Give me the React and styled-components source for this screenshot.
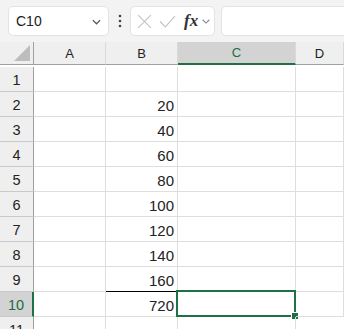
import React from "react";
import styled, { createGlobalStyle } from "styled-components";

const Global = createGlobalStyle`
  html, body {
    margin: 0;
    padding: 0;
    background: #fff;
    font-family: "Liberation Sans", "Noto Sans", sans-serif;
  }
`;

const Page = styled.div`
  width: 344px;
  height: 329px;
  overflow: hidden;
  background: #f3f3f3;
`;

const Toolbar = styled.div`
  display: flex;
  align-items: center;
  height: 42px;
  padding: 0 0 0 8px;
  box-sizing: border-box;
  background: #f3f3f3;
`;

const NameBox = styled.div`
  width: 101px;
  height: 30px;
  box-sizing: border-box;
  background: #fff;
  border: 1px solid #e3e3e3;
  border-radius: 5px;
  display: flex;
  align-items: center;
  justify-content: space-between;
  padding: 0 6px 0 7px;
  font-size: 14px;
  color: #222;
`;

const Dots = styled.div`
  width: 21px;
  display: flex;
  justify-content: center;
  color: #444;
`;

const FxBox = styled.div`
  width: 85px;
  height: 30px;
  box-sizing: border-box;
  background: #fff;
  border: 1px solid #e3e3e3;
  border-radius: 5px;
  display: flex;
  align-items: center;
  padding: 0 0 0 5px;
  gap: 6px;
`;

const Fx = styled.span`
  font-family: "Liberation Serif", "DejaVu Serif", serif;
  font-style: italic;
  font-weight: bold;
  font-size: 17px;
  color: #333;
  margin-left: 2px;
  margin-right: -3px;
`;

const FormulaInput = styled.div`
  flex: 1;
  height: 30px;
  margin-left: 6px;
  margin-right: -10px;
  box-sizing: border-box;
  background: #fff;
  border: 1px solid #e3e3e3;
  border-radius: 5px;
`;

const Grid = styled.div`
  display: grid;
  grid-template-columns: 34px 72px 72px 118px 1fr;
  grid-auto-rows: 25px;
  background: #fff;
`;

const HeaderCell = styled.div`
  height: 23px;
  box-sizing: border-box;
  background: ${(p) => (p.$active ? "#d3d3d3" : "#efefef")};
  border-right: 1px solid ${(p) => (p.$corner ? "#a0a0a0" : "#dadada")};
  border-bottom: ${(p) => (p.$active ? "2px solid #1e7145" : "1px solid #a0a0a0")};
  display: flex;
  align-items: center;
  justify-content: center;
  font-size: 13px;
  color: ${(p) => (p.$active ? "#1e6b45" : "#222")};
  position: relative;
  &:last-child {
    border-right: none;
  }
`;

const Corner = styled.div`
  position: absolute;
  right: 3px;
  bottom: 3px;
  width: 0;
  height: 0;
  border-left: 16px solid transparent;
  border-bottom: 16px solid #bdbdbd;
`;

const RowHead = styled.div`
  box-sizing: border-box;
  background: ${(p) => (p.$active ? "#d3d3d3" : "#efefef")};
  border-right: ${(p) => (p.$active ? "2px solid #1e7145" : "1px solid #a0a0a0")};
  border-bottom: 1px solid #c9c9c9;
  display: flex;
  align-items: center;
  justify-content: center;
  padding-top: 1px;
  font-size: 14.5px;
  color: ${(p) => (p.$active ? "#1e6b45" : "#222")};
`;

const Cell = styled.div`
  box-sizing: border-box;
  border-right: 1px solid #dedede;
  border-bottom: 1px solid ${(p) => (p.$sumLine ? "#000" : "#dedede")};
  display: flex;
  align-items: center;
  justify-content: flex-end;
  padding: 2px 3px 0 0;
  font-size: 15px;
  color: #222;
  position: relative;
  &:last-child {
    border-right: none;
  }
`;

const Selection = styled.div`
  position: absolute;
  left: -2px;
  top: -2px;
  right: -1px;
  bottom: -1px;
  border: 2px solid #1e7145;
  pointer-events: none;
`;

const Handle = styled.div`
  position: absolute;
  right: -5px;
  bottom: -5px;
  width: 6px;
  height: 6px;
  background: #1e7145;
  border: 1px solid #fff;
`;

const values = [null, 20, 40, 60, 80, 100, 120, 140, 160, 720, null];

const Chevron = ({ color = "#555", size = 11 }) => (
  <svg width={size} height={size} viewBox="0 0 12 12">
    <path d="M2 4.5 L6 8.5 L10 4.5" fill="none" stroke={color} strokeWidth="1.3" />
  </svg>
);

export default function App() {
  return (
    <>
      <Global />
      <Page>
        <Toolbar>
          <NameBox>
            <span>C10</span>
            <Chevron />
          </NameBox>
          <Dots>
            <svg width="4" height="14" viewBox="0 0 4 14">
              <circle cx="2" cy="2" r="1.3" fill="#444" />
              <circle cx="2" cy="7" r="1.3" fill="#444" />
              <circle cx="2" cy="12" r="1.3" fill="#444" />
            </svg>
          </Dots>
          <FxBox>
            <svg width="17" height="17" viewBox="0 0 16 16">
              <path d="M2 2 L14 14 M14 2 L2 14" stroke="#c4c4c4" strokeWidth="1.1" />
            </svg>
            <svg width="17" height="17" viewBox="0 0 16 16">
              <path d="M1 8 L6 13 L15 3" fill="none" stroke="#c4c4c4" strokeWidth="1.1" />
            </svg>
            <Fx>fx</Fx>
            <Chevron color="#888" size={10} />
          </FxBox>
          <FormulaInput />
        </Toolbar>
        <Grid>
          <HeaderCell $corner>
            <Corner />
          </HeaderCell>
          <HeaderCell>A</HeaderCell>
          <HeaderCell>B</HeaderCell>
          <HeaderCell $active>C</HeaderCell>
          <HeaderCell>D</HeaderCell>
          {values.map((v, i) => {
            const row = i + 1;
            const active = row === 10;
            return (
              <React.Fragment key={row}>
                <RowHead $active={active}>{row}</RowHead>
                <Cell />
                <Cell $sumLine={row === 9}>{v}</Cell>
                <Cell>
                  {active && (
                    <Selection>
                      <Handle />
                    </Selection>
                  )}
                </Cell>
                <Cell />
              </React.Fragment>
            );
          })}
        </Grid>
      </Page>
    </>
  );
}
